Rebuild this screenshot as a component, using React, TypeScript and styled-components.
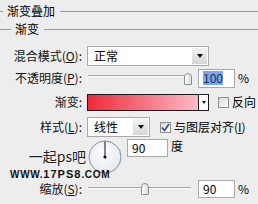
import React from 'react';
import styled, { createGlobalStyle } from 'styled-components';

const GlobalStyle = createGlobalStyle`
  html, body {
    margin: 0;
    padding: 0;
    background: #ededed;
  }
  body {
    font-family: "Noto Sans CJK SC", "Liberation Sans", sans-serif;
    font-size: 12px;
    color: #000;
  }
`;

const Panel = styled.div`
  position: relative;
  width: 258px;
  height: 204px;
  overflow: hidden;
  background: #ededed;
`;

// group title with a rule on both sides
const Legend = styled.div<{ $h: number; $lead: number }>`
  display: flex;
  align-items: center;
  height: ${(p) => p.$h}px;
  &::before {
    content: '';
    width: ${(p) => p.$lead}px;
    border-top: 1px solid #9c9c9c;
  }
  &::after {
    content: '';
    flex: 1;
    border-top: 1px solid #9c9c9c;
  }
`;

const LegendText = styled.span`
  padding: 0 5px 0 4px;
  line-height: 14px;
  white-space: nowrap;
`;

const Form = styled.div`
  display: flex;
  flex-direction: column;
  padding-top: 10px;
`;

const Row = styled.div<{ $h: number; $mt: number; $top?: boolean }>`
  display: grid;
  grid-template-columns: 82px 1fr;
  column-gap: 5px;
  align-items: ${(p) => (p.$top ? 'start' : 'center')};
  height: ${(p) => p.$h}px;
  margin-top: ${(p) => p.$mt}px;
`;

const Label = styled.label`
  text-align: right;
  white-space: nowrap;
  line-height: 12px;
  color: #111;
  & u {
    text-decoration-thickness: 1px;
  }
`;

const Controls = styled.div<{ $top?: boolean }>`
  display: flex;
  align-items: ${(p) => (p.$top ? 'flex-start' : 'center')};
  height: 100%;
`;

const Select = styled.div<{ $w: number }>`
  box-sizing: border-box;
  width: ${(p) => p.$w}px;
  height: 20px;
  border: 1px solid #a9a9a9;
  background: #fff;
  display: flex;
  align-items: center;
`;

const SelectText = styled.span`
  flex: 1;
  padding-left: 6px;
  line-height: 14px;
`;

const DropButton = styled.span`
  width: 15px;
  height: 16px;
  margin-right: 1px;
  background: linear-gradient(#f2f2f2, #d6d6d6);
  display: flex;
  align-items: center;
  justify-content: center;
  &::after {
    content: '';
    border-left: 3.5px solid transparent;
    border-right: 3.5px solid transparent;
    border-top: 4px solid #111;
  }
`;

const Slider = styled.div`
  position: relative;
  width: 104px;
  height: 20px;
  margin-right: 7px;
`;

const Track = styled.div<{ $top: number }>`
  position: absolute;
  left: 1px;
  right: 0;
  top: ${(p) => p.$top}px;
  border-top: 1px solid #a4a4a4;
  border-bottom: 1px solid #fff;
`;

const Thumb = styled.div<{ $left: number; $top: number }>`
  position: absolute;
  left: ${(p) => p.$left}px;
  top: ${(p) => p.$top}px;
  box-sizing: border-box;
  width: 8px;
  height: 12px;
  border: 1px solid #8c8c8c;
  border-radius: 4px 4px 1px 1px;
  background: linear-gradient(to right, #fff, #dcdcdc);
`;

const Field = styled.div<{ $w: number; $h: number }>`
  box-sizing: border-box;
  width: ${(p) => p.$w}px;
  height: ${(p) => p.$h}px;
  border: 1px solid #a9a9a9;
  background: #fff;
  display: flex;
  align-items: center;
  padding-left: 4px;
  line-height: 14px;
`;

const Selected = styled.span`
  background: #7aa8e6;
  color: #12306a;
`;

const Unit = styled.span`
  margin-left: 3px;
  line-height: 14px;
`;

const GradientBox = styled.div`
  box-sizing: border-box;
  width: 122px;
  height: 17px;
  border: 1px solid #1a1a1a;
  display: flex;
`;

const GradientFill = styled.div`
  flex: 1;
  background: linear-gradient(to right, #ee2a3b, #f66a7a 45%, #fbbcc6);
`;

const GradientDrop = styled.div`
  width: 9px;
  border-left: 1px solid #1a1a1a;
  background: #fff;
  display: flex;
  align-items: center;
  justify-content: center;
  &::after {
    content: '';
    border-left: 2.5px solid transparent;
    border-right: 2.5px solid transparent;
    border-top: 3px solid #111;
  }
`;

const Check = styled.span<{ $ml: number }>`
  box-sizing: border-box;
  width: 11px;
  height: 11px;
  margin-left: ${(p) => p.$ml}px;
  border: 1px solid #8e8e8e;
  background: linear-gradient(135deg, #d8d8d8, #fff);
  display: flex;
  align-items: center;
  justify-content: center;
`;

const CheckLabel = styled.span`
  margin-left: 3px;
  line-height: 14px;
  white-space: nowrap;
`;

const Dial = styled.svg`
  margin: 1px 5px 0 1px;
  flex: none;
`;

const Watermark = styled.div`
  position: absolute;
  left: 10px;
  top: 148px;
  display: flex;
  flex-direction: column;
  align-items: flex-end;
  gap: 5px;
  width: 96px;
  pointer-events: none;
`;

const MarkTitle = styled.span`
  font-size: 14px;
  line-height: 16px;
  color: #1e1e1e;
  margin-right: 20px;
  text-shadow: 0 0 2px #fff;
`;

const MarkSite = styled.span`
  font-family: "Liberation Sans", "DejaVu Sans", sans-serif;
  font-weight: 900;
  font-size: 10px;
  line-height: 10px;
  height: 10px;
  color: #111;
  text-transform: uppercase;
  letter-spacing: 0.7px;
  align-self: flex-start;
  & b {
    font-size: 11px;
    line-height: 10px;
    letter-spacing: 1px;
  }
`;

const App = () => {
  return (
    <Panel>
      <GlobalStyle />
      <Legend $h={22} $lead={3}>
        <LegendText>渐变叠加</LegendText>
      </Legend>
      <Legend $h={14} $lead={11}>
        <LegendText>渐变</LegendText>
      </Legend>
      <Form>
        <Row $h={20} $mt={0}>
          <Label>混合模式(<u>O</u>):</Label>
          <Controls>
            <Select $w={122}>
              <SelectText>正常</SelectText>
              <DropButton />
            </Select>
          </Controls>
        </Row>
        <Row $h={20} $mt={2}>
          <Label>不透明度(<u>P</u>):</Label>
          <Controls>
            <Slider>
              <Track $top={7} />
              <Thumb $left={97} $top={5} />
            </Slider>
            <Field $w={37} $h={19}>
              <Selected>100</Selected>
            </Field>
            <Unit>%</Unit>
          </Controls>
        </Row>
        <Row $h={20} $mt={4}>
          <Label>渐变:</Label>
          <Controls>
            <GradientBox>
              <GradientFill />
              <GradientDrop />
            </GradientBox>
            <Check $ml={9} />
            <CheckLabel>反向</CheckLabel>
          </Controls>
        </Row>
        <Row $h={20} $mt={5}>
          <Label>样式(<u>L</u>):</Label>
          <Controls>
            <Select $w={63}>
              <SelectText>线性</SelectText>
              <DropButton />
            </Select>
            <Check $ml={10}>
              <svg width="9" height="9" viewBox="0 0 9 9">
                <path d="M1 4.5 L3.5 7.5 L8 1" fill="none" stroke="#34489a" strokeWidth="1.6" />
              </svg>
            </Check>
            <CheckLabel>与图层对齐(<u>I</u>)</CheckLabel>
          </Controls>
        </Row>
        <Row $h={35} $mt={2} $top>
          <Label />
          <Controls $top>
            <Dial width="34" height="34" viewBox="0 0 34 34">
              <defs>
                <radialGradient id="dialFill" cx="45%" cy="40%" r="60%">
                  <stop offset="0%" stopColor="#ffffff" />
                  <stop offset="100%" stopColor="#e4e8ee" />
                </radialGradient>
              </defs>
              <circle cx="17" cy="17" r="16" fill="url(#dialFill)" stroke="#8591a3" strokeWidth="1" />
              <line x1="17" y1="17" x2="17" y2="1.5" stroke="#111" strokeWidth="1" />
              <circle cx="17" cy="17" r="1.6" fill="#111" />
            </Dial>
            <Field $w={41} $h={18}>90</Field>
            <Unit>度</Unit>
          </Controls>
        </Row>
        <Row $h={20} $mt={5}>
          <Label>缩放(<u>S</u>):</Label>
          <Controls>
            <Slider>
              <Track $top={8} />
              <Thumb $left={54} $top={4} />
            </Slider>
            <Field $w={37} $h={18}>90</Field>
            <Unit>%</Unit>
          </Controls>
        </Row>
      </Form>
      <Watermark>
        <MarkTitle>一起ps吧</MarkTitle>
        <MarkSite>
          www.<b>17PS8</b>.com
        </MarkSite>
      </Watermark>
    </Panel>
  );
};

export default App;
